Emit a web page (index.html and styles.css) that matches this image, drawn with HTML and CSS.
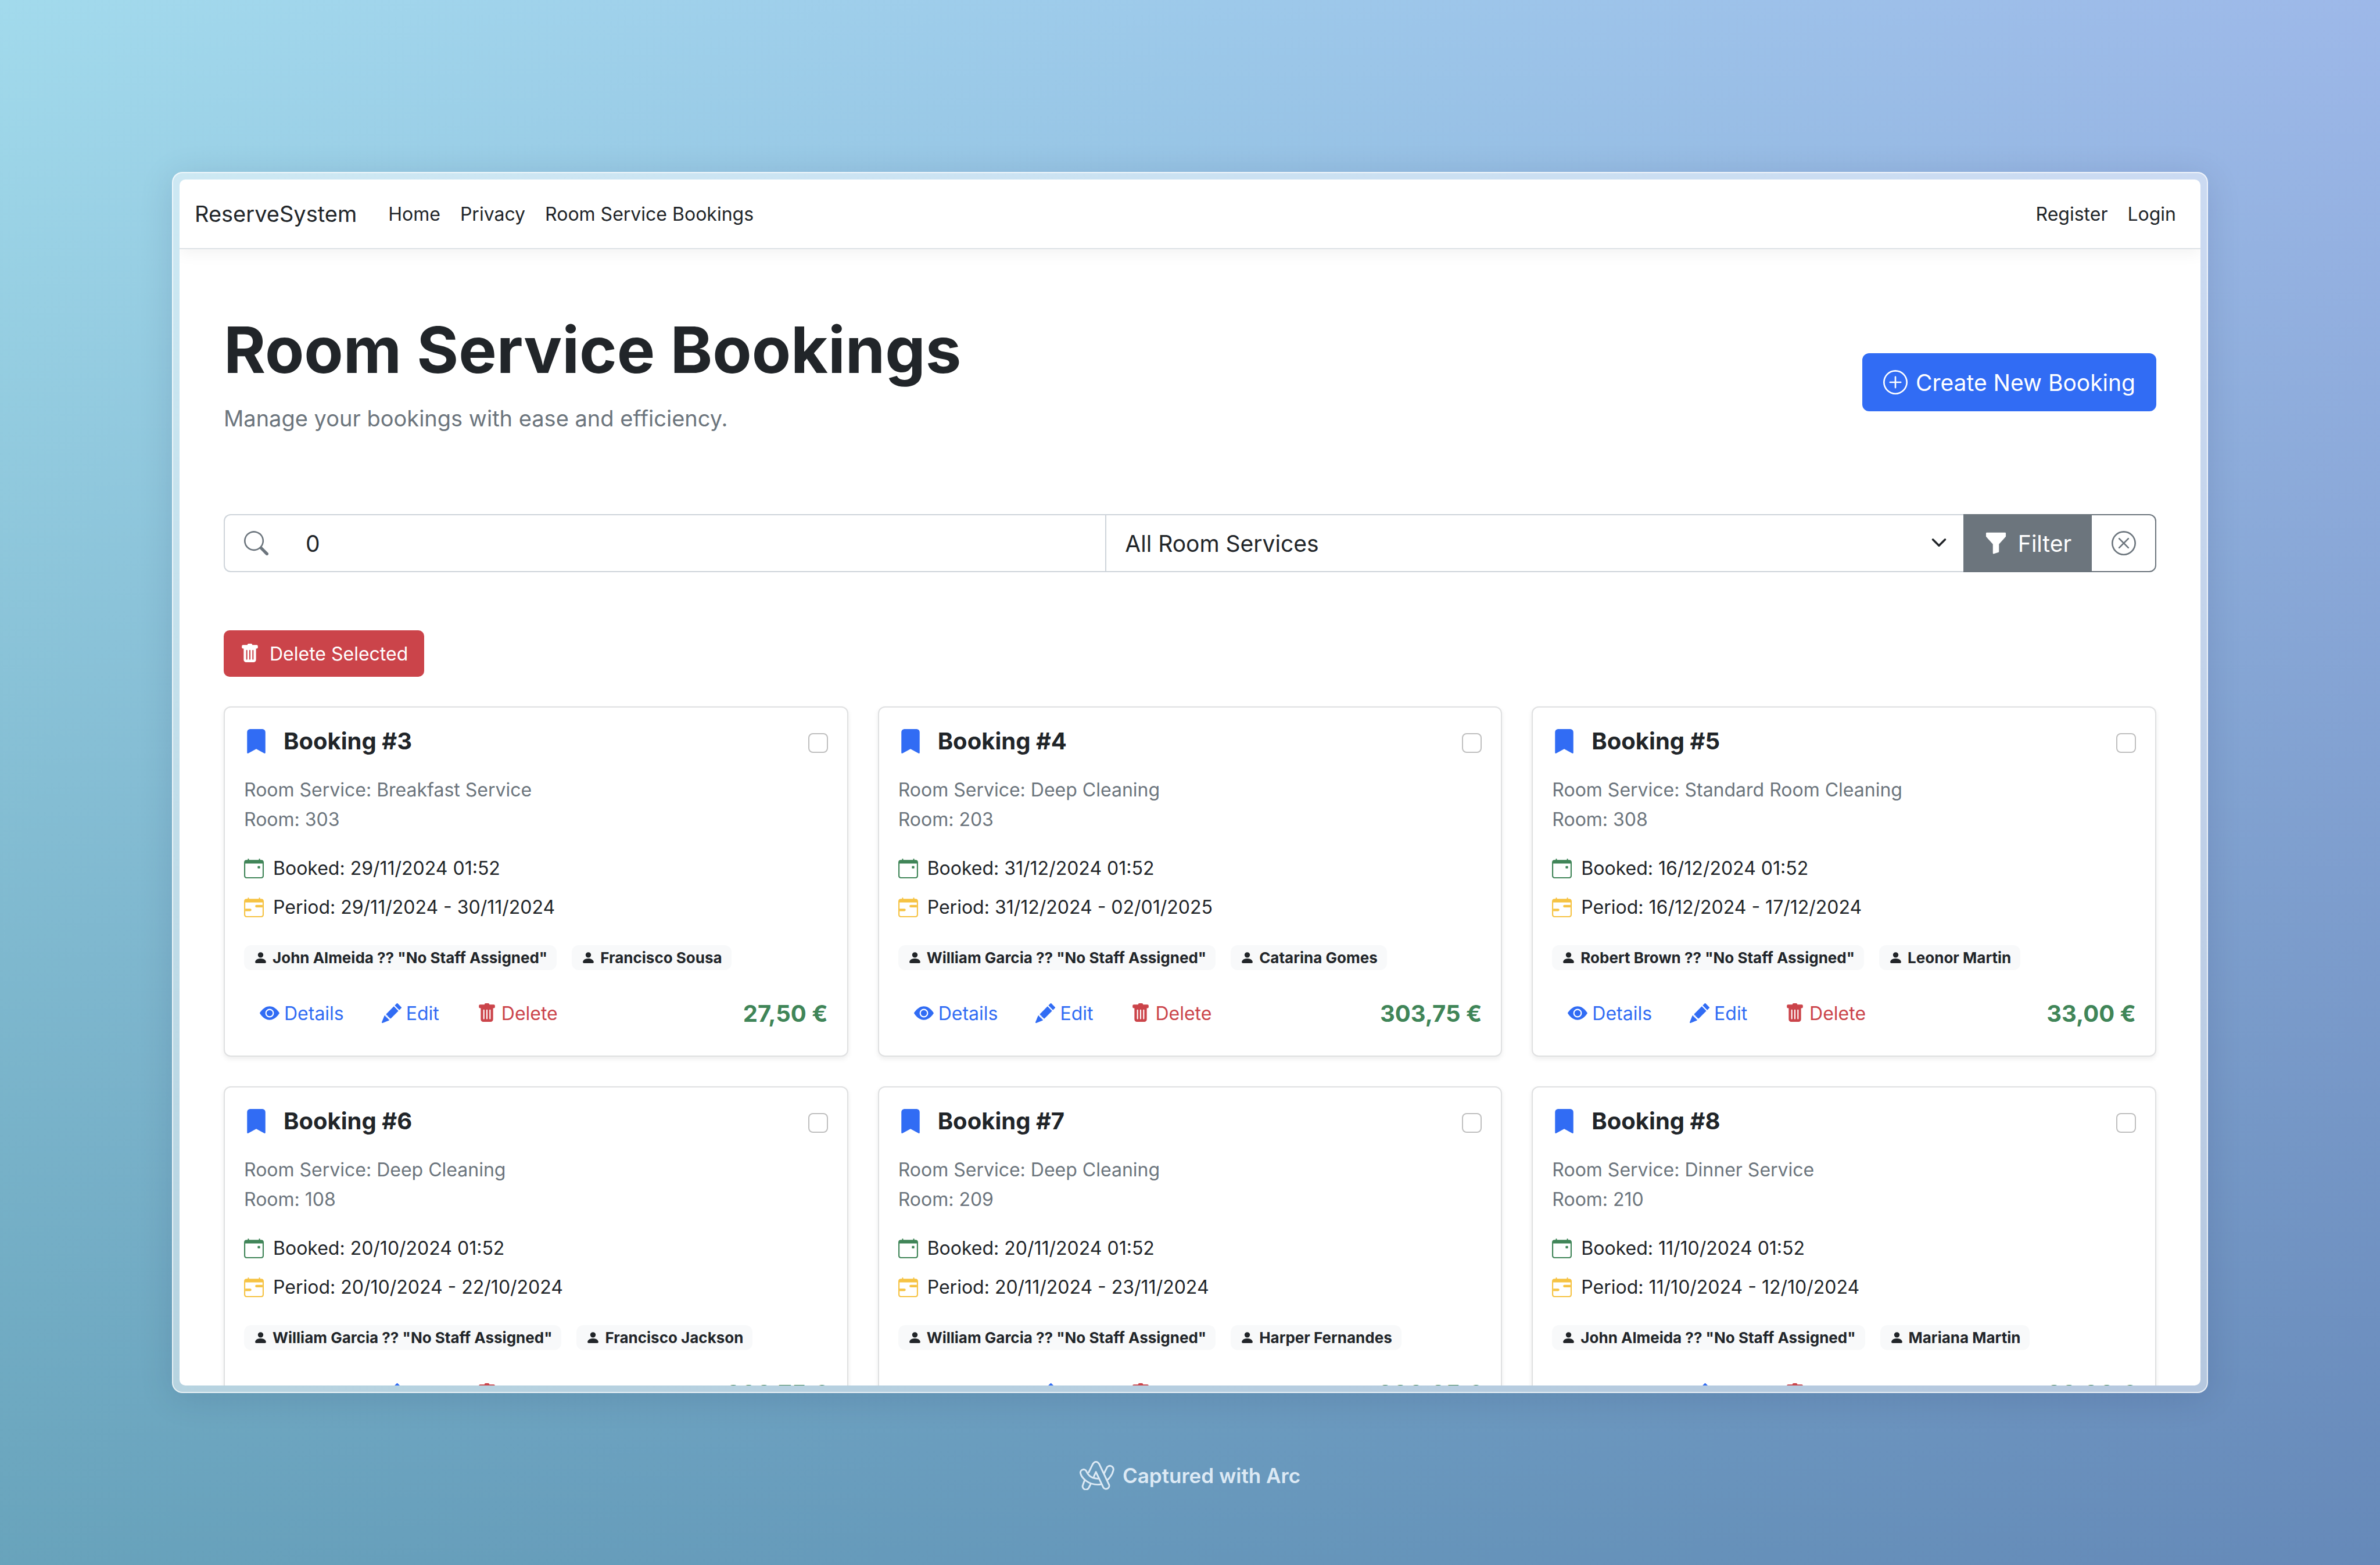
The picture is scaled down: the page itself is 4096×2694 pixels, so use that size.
FILE: index.html
```
<!DOCTYPE html>
<html lang="en">
<head>
<meta charset="utf-8">
<meta name="viewport" content="width=device-width, initial-scale=1">
<title>Room Service Bookings - ReserveSystem</title>
<link rel="stylesheet" href="styles.css">
</head>
<body>
<svg class="sprite" aria-hidden="true">
  <symbol id="bookmark" viewBox="0 0 16 16"><path d="M2 2v13.5a.5.5 0 0 0 .74.439L8 13.069l5.26 2.87A.5.5 0 0 0 14 15.5V2a2 2 0 0 0-2-2H4a2 2 0 0 0-2 2"/></symbol>
  <symbol id="plus-circle" viewBox="0 0 16 16"><path d="M8 15A7 7 0 1 1 8 1a7 7 0 0 1 0 14m0 1A8 8 0 1 0 8 0a8 8 0 0 0 0 16"/><path d="M8 4a.5.5 0 0 1 .5.5v3h3a.5.5 0 0 1 0 1h-3v3a.5.5 0 0 1-1 0v-3h-3a.5.5 0 0 1 0-1h3v-3A.5.5 0 0 1 8 4"/></symbol>
  <symbol id="x-circle" viewBox="0 0 16 16"><path d="M8 15A7 7 0 1 1 8 1a7 7 0 0 1 0 14m0 1A8 8 0 1 0 8 0a8 8 0 0 0 0 16"/><path d="M4.646 4.646a.5.5 0 0 1 .708 0L8 7.293l2.646-2.647a.5.5 0 0 1 .708.708L8.707 8l2.647 2.646a.5.5 0 0 1-.708.708L8 8.707l-2.646 2.647a.5.5 0 0 1-.708-.708L7.293 8 4.646 5.354a.5.5 0 0 1 0-.708"/></symbol>
  <symbol id="search" viewBox="0 0 16 16"><path d="M11.742 10.344a6.5 6.5 0 1 0-1.397 1.398h-.001q.044.06.098.115l3.85 3.85a1 1 0 0 0 1.415-1.414l-3.85-3.85a1 1 0 0 0-.115-.1zM12 6.5a5.5 5.5 0 1 1-11 0 5.5 5.5 0 0 1 11 0"/></symbol>
  <symbol id="funnel" viewBox="0 0 16 16"><path d="M1.5 1.5A.5.5 0 0 1 2 1h12a.5.5 0 0 1 .5.5v2a.5.5 0 0 1-.128.334L10 8.692V13.5a.5.5 0 0 1-.342.474l-3 1A.5.5 0 0 1 6 14.5V8.692L1.628 3.834A.5.5 0 0 1 1.5 3.5z"/></symbol>
  <symbol id="trash" viewBox="0 0 16 16"><path d="M2.5 1a1 1 0 0 0-1 1v1a1 1 0 0 0 1 1H3v9a2 2 0 0 0 2 2h6a2 2 0 0 0 2-2V4h.5a1 1 0 0 0 1-1V2a1 1 0 0 0-1-1H10a1 1 0 0 0-1-1H7a1 1 0 0 0-1 1zm3 4a.5.5 0 0 1 .5.5v7a.5.5 0 0 1-1 0v-7a.5.5 0 0 1 .5-.5M8 5a.5.5 0 0 1 .5.5v7a.5.5 0 0 1-1 0v-7A.5.5 0 0 1 8 5m3 .5v7a.5.5 0 0 1-1 0v-7a.5.5 0 0 1 1 0"/></symbol>
  <symbol id="calendar-event" viewBox="0 0 16 16"><path d="M11 6.5a.5.5 0 0 1 .5-.5h1a.5.5 0 0 1 .5.5v1a.5.5 0 0 1-.5.5h-1a.5.5 0 0 1-.5-.5z"/><path d="M3.5 0a.5.5 0 0 1 .5.5V1h8V.5a.5.5 0 0 1 1 0V1h1a2 2 0 0 1 2 2v11a2 2 0 0 1-2 2H2a2 2 0 0 1-2-2V3a2 2 0 0 1 2-2h1V.5a.5.5 0 0 1 .5-.5M1 4v10a1 1 0 0 0 1 1h12a1 1 0 0 0 1-1V4z"/></symbol>
  <symbol id="calendar-range" viewBox="0 0 16 16"><path d="M9 7a1 1 0 0 1 1-1h5v2h-5a1 1 0 0 1-1-1M1 9h4a1 1 0 0 1 0 2H1z"/><path d="M3.5 0a.5.5 0 0 1 .5.5V1h8V.5a.5.5 0 0 1 1 0V1h1a2 2 0 0 1 2 2v11a2 2 0 0 1-2 2H2a2 2 0 0 1-2-2V3a2 2 0 0 1 2-2h1V.5a.5.5 0 0 1 .5-.5M1 4v10a1 1 0 0 0 1 1h12a1 1 0 0 0 1-1V4z"/></symbol>
  <symbol id="person" viewBox="0 0 16 16"><path d="M3 14s-1 0-1-1 1-4 6-4 6 3 6 4-1 1-1 1zm5-6a3 3 0 1 0 0-6 3 3 0 0 0 0 6"/></symbol>
  <symbol id="eye" viewBox="0 0 16 16"><path d="M10.5 8a2.5 2.5 0 1 1-5 0 2.5 2.5 0 0 1 5 0"/><path d="M0 8s3-5.5 8-5.5S16 8 16 8s-3 5.5-8 5.5S0 8 0 8m8 3.5a3.5 3.5 0 1 0 0-7 3.5 3.5 0 0 0 0 7"/></symbol>
  <symbol id="pencil" viewBox="0 0 16 16"><path d="M12.854.146a.5.5 0 0 0-.707 0L10.5 1.793 14.207 5.5l1.647-1.646a.5.5 0 0 0 0-.708zm.646 6.061L9.793 2.5 3.293 9H3.5a.5.5 0 0 1 .5.5v.5h.5a.5.5 0 0 1 .5.5v.5h.5a.5.5 0 0 1 .5.5v.5h.5a.5.5 0 0 1 .5.5v.207zm-7.468 7.468A.5.5 0 0 1 6 13.5V13h-.5a.5.5 0 0 1-.5-.5V12h-.5a.5.5 0 0 1-.5-.5V11h-.5a.5.5 0 0 1-.5-.5V10h-.5a.5.5 0 0 1-.175-.032l-.179.178a.5.5 0 0 0-.11.168l-2 5a.5.5 0 0 0 .65.65l5-2a.5.5 0 0 0 .168-.11z"/></symbol>
  <symbol id="chevron" viewBox="0 0 16 16"><path class="line" d="m2 5 6 6 6-6"/></symbol>
</svg>

<div class="window">
  <div class="page">
    <nav class="navbar">
      <a class="brand" href="#">ReserveSystem</a>
      <a class="nav-link" href="#">Home</a>
      <a class="nav-link" href="#">Privacy</a>
      <a class="nav-link" href="#">Room Service Bookings</a>
      <a class="nav-link push" href="#">Register</a>
      <a class="nav-link" href="#">Login</a>
    </nav>

    <main class="container">
      <header class="page-head">
        <div>
          <h1>Room Service Bookings</h1>
          <p class="lead">Manage your bookings with ease and efficiency.</p>
        </div>
        <button class="btn btn-create" type="button"><svg class="icon-lg"><use href="#plus-circle"/></svg>Create New Booking</button>
      </header>

      <form class="filter">
        <label class="filter-icon" for="q"><svg class="icon-lg"><use href="#search"/></svg></label>
        <input id="q" class="filter-input" type="text" value="0" aria-label="Search bookings">
        <div class="filter-select">
          <select aria-label="Room service"><option>All Room Services</option></select>
          <svg class="chevron"><use href="#chevron"/></svg>
        </div>
        <button class="btn btn-filter" type="button"><svg class="icon-lg"><use href="#funnel"/></svg>Filter</button>
        <button class="btn btn-clear" type="button" aria-label="Clear filter"><svg class="icon-lg"><use href="#x-circle"/></svg></button>
      </form>

      <button class="btn btn-delete" type="button"><svg class="icon"><use href="#trash"/></svg>Delete Selected</button>

      <section class="cards">
        <article class="card">
          <div class="card-head"><svg class="icon-lg blue"><use href="#bookmark"/></svg><h2>Booking #3</h2><input type="checkbox" aria-label="Select booking 3"></div>
          <p class="muted">Room Service: Breakfast Service<br>Room: 303</p>
          <p class="row"><svg class="icon green"><use href="#calendar-event"/></svg>Booked: 29/11/2024 01:52</p>
          <p class="row"><svg class="icon yellow"><use href="#calendar-range"/></svg>Period: 29/11/2024 - 30/11/2024</p>
          <div class="badges"><span class="badge"><svg class="icon-sm"><use href="#person"/></svg>John Almeida ?? "No Staff Assigned"</span><span class="badge"><svg class="icon-sm"><use href="#person"/></svg>Francisco Sousa</span></div>
          <div class="actions"><a href="#"><svg class="icon"><use href="#eye"/></svg>Details</a><a href="#"><svg class="icon"><use href="#pencil"/></svg>Edit</a><a class="danger" href="#"><svg class="icon"><use href="#trash"/></svg>Delete</a><strong class="price">27,50 €</strong></div>
        </article>
        <article class="card">
          <div class="card-head"><svg class="icon-lg blue"><use href="#bookmark"/></svg><h2>Booking #4</h2><input type="checkbox" aria-label="Select booking 4"></div>
          <p class="muted">Room Service: Deep Cleaning<br>Room: 203</p>
          <p class="row"><svg class="icon green"><use href="#calendar-event"/></svg>Booked: 31/12/2024 01:52</p>
          <p class="row"><svg class="icon yellow"><use href="#calendar-range"/></svg>Period: 31/12/2024 - 02/01/2025</p>
          <div class="badges"><span class="badge"><svg class="icon-sm"><use href="#person"/></svg>William Garcia ?? "No Staff Assigned"</span><span class="badge"><svg class="icon-sm"><use href="#person"/></svg>Catarina Gomes</span></div>
          <div class="actions"><a href="#"><svg class="icon"><use href="#eye"/></svg>Details</a><a href="#"><svg class="icon"><use href="#pencil"/></svg>Edit</a><a class="danger" href="#"><svg class="icon"><use href="#trash"/></svg>Delete</a><strong class="price">303,75 €</strong></div>
        </article>
        <article class="card">
          <div class="card-head"><svg class="icon-lg blue"><use href="#bookmark"/></svg><h2>Booking #5</h2><input type="checkbox" aria-label="Select booking 5"></div>
          <p class="muted">Room Service: Standard Room Cleaning<br>Room: 308</p>
          <p class="row"><svg class="icon green"><use href="#calendar-event"/></svg>Booked: 16/12/2024 01:52</p>
          <p class="row"><svg class="icon yellow"><use href="#calendar-range"/></svg>Period: 16/12/2024 - 17/12/2024</p>
          <div class="badges"><span class="badge"><svg class="icon-sm"><use href="#person"/></svg>Robert Brown ?? "No Staff Assigned"</span><span class="badge"><svg class="icon-sm"><use href="#person"/></svg>Leonor Martin</span></div>
          <div class="actions"><a href="#"><svg class="icon"><use href="#eye"/></svg>Details</a><a href="#"><svg class="icon"><use href="#pencil"/></svg>Edit</a><a class="danger" href="#"><svg class="icon"><use href="#trash"/></svg>Delete</a><strong class="price">33,00 €</strong></div>
        </article>
        <article class="card">
          <div class="card-head"><svg class="icon-lg blue"><use href="#bookmark"/></svg><h2>Booking #6</h2><input type="checkbox" aria-label="Select booking 6"></div>
          <p class="muted">Room Service: Deep Cleaning<br>Room: 108</p>
          <p class="row"><svg class="icon green"><use href="#calendar-event"/></svg>Booked: 20/10/2024 01:52</p>
          <p class="row"><svg class="icon yellow"><use href="#calendar-range"/></svg>Period: 20/10/2024 - 22/10/2024</p>
          <div class="badges"><span class="badge"><svg class="icon-sm"><use href="#person"/></svg>William Garcia ?? "No Staff Assigned"</span><span class="badge"><svg class="icon-sm"><use href="#person"/></svg>Francisco Jackson</span></div>
          <div class="actions"><a href="#"><svg class="icon"><use href="#eye"/></svg>Details</a><a href="#"><svg class="icon"><use href="#pencil"/></svg>Edit</a><a class="danger" href="#"><svg class="icon"><use href="#trash"/></svg>Delete</a><strong class="price">303,75 €</strong></div>
        </article>
        <article class="card">
          <div class="card-head"><svg class="icon-lg blue"><use href="#bookmark"/></svg><h2>Booking #7</h2><input type="checkbox" aria-label="Select booking 7"></div>
          <p class="muted">Room Service: Deep Cleaning<br>Room: 209</p>
          <p class="row"><svg class="icon green"><use href="#calendar-event"/></svg>Booked: 20/11/2024 01:52</p>
          <p class="row"><svg class="icon yellow"><use href="#calendar-range"/></svg>Period: 20/11/2024 - 23/11/2024</p>
          <div class="badges"><span class="badge"><svg class="icon-sm"><use href="#person"/></svg>William Garcia ?? "No Staff Assigned"</span><span class="badge"><svg class="icon-sm"><use href="#person"/></svg>Harper Fernandes</span></div>
          <div class="actions"><a href="#"><svg class="icon"><use href="#eye"/></svg>Details</a><a href="#"><svg class="icon"><use href="#pencil"/></svg>Edit</a><a class="danger" href="#"><svg class="icon"><use href="#trash"/></svg>Delete</a><strong class="price">200,25 €</strong></div>
        </article>
        <article class="card">
          <div class="card-head"><svg class="icon-lg blue"><use href="#bookmark"/></svg><h2>Booking #8</h2><input type="checkbox" aria-label="Select booking 8"></div>
          <p class="muted">Room Service: Dinner Service<br>Room: 210</p>
          <p class="row"><svg class="icon green"><use href="#calendar-event"/></svg>Booked: 11/10/2024 01:52</p>
          <p class="row"><svg class="icon yellow"><use href="#calendar-range"/></svg>Period: 11/10/2024 - 12/10/2024</p>
          <div class="badges"><span class="badge"><svg class="icon-sm"><use href="#person"/></svg>John Almeida ?? "No Staff Assigned"</span><span class="badge"><svg class="icon-sm"><use href="#person"/></svg>Mariana Martin</span></div>
          <div class="actions"><a href="#"><svg class="icon"><use href="#eye"/></svg>Details</a><a href="#"><svg class="icon"><use href="#pencil"/></svg>Edit</a><a class="danger" href="#"><svg class="icon"><use href="#trash"/></svg>Delete</a><strong class="price">33,00 €</strong></div>
        </article>
      </section>
    </main>
  </div>
</div>

<footer class="credit">
  <svg class="logo" viewBox="28 38 222 186" aria-hidden="true">
    <path d="M86 110 L112 57 Q132 28 153 57 L214 186 A19 19 0 0 1 179 207 L132 108 L119 137"/>
    <path d="M166 187 Q112 196 70 166 Q38 142 33 115 A20 20 0 0 1 71 104 Q90 150 146 151"/>
    <path d="M184 118 L200 85 A20 20 0 0 1 243 98 Q235 133 205 160"/>
    <path d="M59 163 L49 190 A19 19 0 0 0 86 210 L98 186"/>
  </svg>
  <span>Captured with Arc</span>
</footer>
</body>
</html>
```
FILE: styles.css
```
* { box-sizing: border-box; }

body {
  margin: 0;
  height: 100vh;
  padding: 296px 296px 0;
  display: grid;
  grid-template-rows: minmax(0, 1fr) 296px;
  font: 400 32px/51px Inter, "Liberation Sans", sans-serif;
  color: #212529;
  background:
    linear-gradient(180deg, #ffffff, #a5c3cb),
    linear-gradient(102deg, #a2daec, #9dc9ea 45%, #9db3e8);
  background-blend-mode: multiply;
}

h1, h2, p { margin: 0; }
a { color: inherit; text-decoration: none; }
button, input, select { font: inherit; color: inherit; margin: 0; }
svg { fill: currentColor; flex: none; display: block; }

.sprite { position: absolute; width: 0; height: 0; }
.line { fill: none; stroke: currentColor; stroke-width: 2; stroke-linecap: round; stroke-linejoin: round; }
.icon { width: 34px; height: 34px; }
.icon-sm { width: 25px; height: 25px; }
.icon-lg { width: 42px; height: 42px; }
.blue { color: #316cf4; }
.green { color: #408558; }
.yellow { color: #f6c344; }

/* Browser window */
.window {
  padding: 11px;
  border: 2px solid rgba(255, 255, 255, .7);
  border-radius: 18px;
  background: rgba(255, 255, 255, .5);
  box-shadow: 0 8px 60px rgba(0, 20, 60, .12);
}
.page {
  height: 100%;
  overflow: hidden;
  border-radius: 10px;
  background: #fff;
}

/* Navigation */
.navbar {
  display: flex;
  align-items: center;
  gap: 34px;
  height: 120px;
  padding: 0 42px 0 26px;
  border-bottom: 2px solid #dee2e6;
  box-shadow: 0 8px 25px rgba(0, 0, 0, .05);
}
.brand { font-size: 38px; margin-right: 20px; }
.push { margin-left: auto; }

.container { padding: 102px 76px; }

.page-head {
  display: flex;
  align-items: center;
  justify-content: space-between;
  margin-bottom: 100px;
}
h1 { font-size: 110px; line-height: 142px; font-weight: 700; }
.lead { margin: 16px 0 33px; font-size: 38px; line-height: 63px; color: #6c757d; }

/* Buttons */
.btn {
  display: inline-flex;
  align-items: center;
  justify-content: center;
  gap: 17px;
  height: 100px;
  padding: 0 34px;
  border: 2px solid transparent;
  font-size: 39px;
  color: #fff;
}
.btn-create { gap: 14px; background: #316cf4; border-radius: 12px; }
.btn-filter { background: #6c757d; width: 221px; }
.btn-clear { width: 111px; border-color: #6c757d; border-left: 0; border-radius: 0 12px 12px 0; background: #fff; color: #6c757d; }
.btn-delete { height: 80px; padding: 0 26px; border-radius: 10px; font-size: 32px; background: #cb444a; }

/* Filter bar */
.filter { display: flex; height: 100px; margin-bottom: 100px; font-size: 39px; }
.filter-icon {
  display: flex;
  align-items: center;
  width: 111px;
  padding-left: 33px;
  border: 2px solid #ced4da;
  border-right: 0;
  border-radius: 12px 0 0 12px;
  color: #6c757d;
}
.filter-input {
  flex: 31 1 0;
  min-width: 0;
  padding: 0 30px;
  border: solid #ced4da;
  border-width: 2px 0;
  background: none;
}
.filter-select { flex: 34 1 0; min-width: 0; position: relative; }
.filter-select select {
  width: 100%;
  height: 100%;
  padding: 0 100px 0 32px;
  border: 2px solid #ced4da;
  border-right: 0;
  border-radius: 0;
  appearance: none;
  background: #fff;
}
.chevron { position: absolute; right: 28px; top: 35px; width: 28px; height: 28px; pointer-events: none; }

/* Booking cards */
.cards {
  display: grid;
  grid-template-columns: repeat(3, minmax(0, 1fr));
  gap: 51px;
  margin-top: 51px;
}
.card {
  padding: 33px;
  border: 2px solid #dfe0e1;
  border-radius: 12px;
  background: #fff;
  box-shadow: 0 4px 8px rgba(0, 0, 0, .075);
}
.card-head { display: flex; align-items: center; }
.card-head h2 { margin: 0 auto 0 26px; font-size: 40px; line-height: 50px; font-weight: 700; }
.card-head input {
  width: 34px;
  height: 34px;
  margin-top: 6px;
  appearance: none;
  border: 2px solid #bfbfbf;
  border-radius: 8px;
  background: #fff;
}
.muted { margin: 33px 0; color: #6c757d; }
.row { display: flex; align-items: center; gap: 16px; margin-bottom: 16px; }
.badges { display: flex; gap: 26px; margin-top: 40px; }
.badge {
  display: flex;
  align-items: center;
  gap: 8px;
  height: 43px;
  padding: 0 16px;
  border-radius: 12px;
  background: #f8f9fa;
  font-size: 26px;
  line-height: 43px;
  font-weight: 700;
}
.actions { display: flex; align-items: center; gap: 11px; margin-top: 34px; color: #316cf4; }
.actions a { display: flex; align-items: center; gap: 8px; height: 80px; padding: 0 27px; }
.actions .danger { color: #cb444a; }
.price { margin-left: auto; font-size: 40px; color: #408558; }

/* Footer */
.credit {
  display: flex;
  align-items: center;
  justify-content: center;
  gap: 14px;
  padding-bottom: 12px;
  font-size: 35px;
  font-weight: 600;
  color: #dce9f4;
}
.logo { width: 60px; height: 50px; fill: none; stroke: currentColor; stroke-width: 11; stroke-linecap: round; stroke-linejoin: round; }
```
